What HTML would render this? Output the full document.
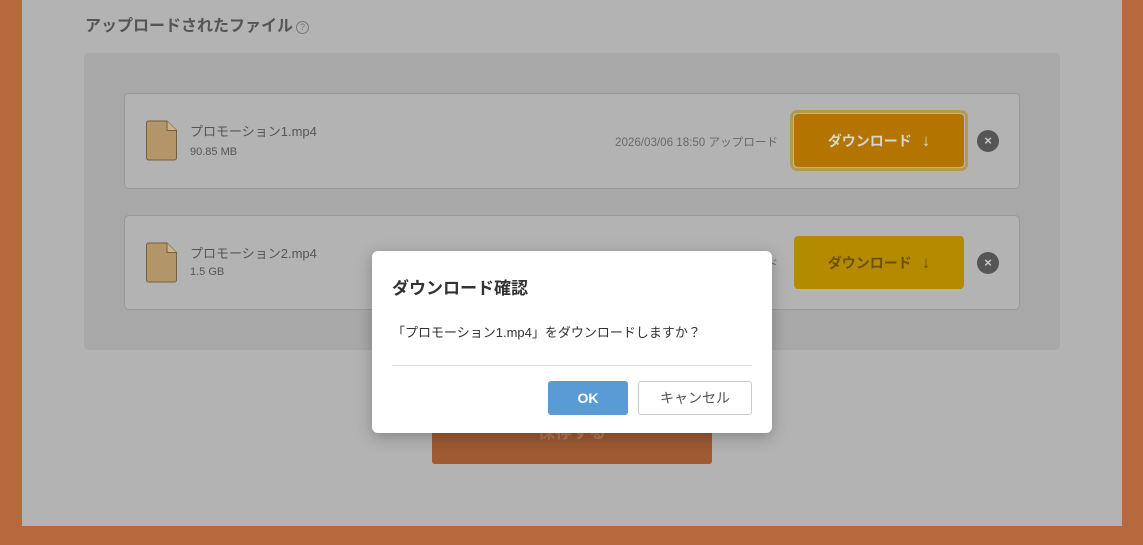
<!DOCTYPE html>
<html><head><meta charset="utf-8"><style>
*{box-sizing:border-box;margin:0;padding:0}
body{width:1143px;height:545px;background:#b5693d;font-family:"Liberation Sans","Noto Sans CJK JP",sans-serif;position:relative;overflow:hidden}
.main{position:absolute;left:22px;top:0;width:1100px;height:526px;background:#b3b3b3}
.abs{position:absolute}
.title{left:85px;top:12px;font-size:16px;font-weight:bold;color:#555}
.q{display:inline-block;width:13px;height:13px;border:1.3px solid #777;border-radius:50%;font-size:9px;color:#777;text-align:center;line-height:11px;vertical-align:1px;margin-left:3px;font-weight:normal}
.panel{left:84px;top:53px;width:976px;height:297px;background:#a8a8a8;border-radius:5px}
.card{left:124px;width:896px;background:#b3b3b3;border:1px solid #999;border-radius:5px}
.icon{left:145px}
.name{left:190px;font-size:13px;color:#555}
.size{left:190px;font-size:11px;color:#555}
.date{font-size:11.6px;color:#6a6a6a}
.btn{width:170px;height:53px;border-radius:4px;font-size:14px;font-weight:bold;text-align:center;line-height:53px}
.btn b{font-size:17px;margin-left:10px;font-weight:normal}
.x{width:22px;height:22px;border-radius:50%;background:#555;color:#ccc;font-size:13px;font-weight:bold;text-align:center;line-height:21px}
.save{left:432px;top:415px;width:280px;height:49px;background:#9e5a33;border-radius:3px;color:#b07a5a;font-size:17px;font-weight:bold;text-align:center;line-height:36px;overflow:hidden}
.dlg{left:372px;top:251px;width:400px;height:182px;background:#fff;border-radius:6px;box-shadow:0 4px 16px rgba(0,0,0,.25)}
</style></head><body>
<div class="main"></div>
<div class="abs title">アップロードされたファイル<span class="q">?</span></div>
<div class="abs panel"></div>
<div class="abs card" style="top:93px;height:96px"></div>
<div class="abs card" style="top:215px;height:95px"></div>
<svg class="abs icon" style="top:120px" width="33" height="41" viewBox="0 0 33 41"><path d="M1.5 3a2 2 0 0 1 2-2H22l9.5 9.5V38a2 2 0 0 1-2 2h-26a2 2 0 0 1-2-2z" fill="#b3956a" stroke="#7a5e3a"/><path d="M22 1v9.5h9.5" fill="#c8b48f" stroke="#7a5e3a"/></svg>
<svg class="abs icon" style="top:242px" width="33" height="41" viewBox="0 0 33 41"><path d="M1.5 3a2 2 0 0 1 2-2H22l9.5 9.5V38a2 2 0 0 1-2 2h-26a2 2 0 0 1-2-2z" fill="#b3956a" stroke="#7a5e3a"/><path d="M22 1v9.5h9.5" fill="#c8b48f" stroke="#7a5e3a"/></svg>
<div class="abs name" style="top:121px">プロモーション1.mp4</div>
<div class="abs size" style="top:146px">90.85 MB</div>
<div class="abs name" style="top:243px">プロモーション2.mp4</div>
<div class="abs size" style="top:266px">1.5 GB</div>
<div class="abs date" style="left:615px;top:134px">2026/03/06 18:50 アップロード</div>
<div class="abs date" style="left:615px;top:256px">2026/03/06 18:50 アップロード</div>
<div class="abs" style="left:790px;top:110px;width:178px;height:61px;border:3px solid #b39a50;border-radius:7px"></div>
<div class="abs btn" style="left:794px;top:114px;background:#b37400;color:#d6d6d6">ダウンロード<b>↓</b></div>
<div class="abs btn" style="left:794px;top:236px;background:#b38a00;color:#6b5200">ダウンロード<b>↓</b></div>
<div class="abs x" style="left:977px;top:130px">×</div>
<div class="abs x" style="left:977px;top:252px">×</div>
<div class="abs save">保存する</div>
<div class="abs dlg">
<div class="abs" style="left:20px;top:23px;font-size:17px;font-weight:bold;color:#333">ダウンロード確認</div>
<div class="abs" style="left:20px;top:71px;font-size:13px;color:#333">「プロモーション1.mp4」をダウンロードしますか？</div>
<div class="abs" style="left:20px;top:114px;width:360px;height:1px;background:#ddd"></div>
<div class="abs" style="left:176px;top:130px;width:80px;height:34px;background:#5b9bd5;border-radius:3px;color:#fff;font-weight:bold;font-size:14px;text-align:center;line-height:34px">OK</div>
<div class="abs" style="left:266px;top:130px;width:114px;height:34px;border:1px solid #ccc;border-radius:3px;color:#555;font-size:14px;text-align:center;line-height:32px">キャンセル</div>
</div>
</body></html>
